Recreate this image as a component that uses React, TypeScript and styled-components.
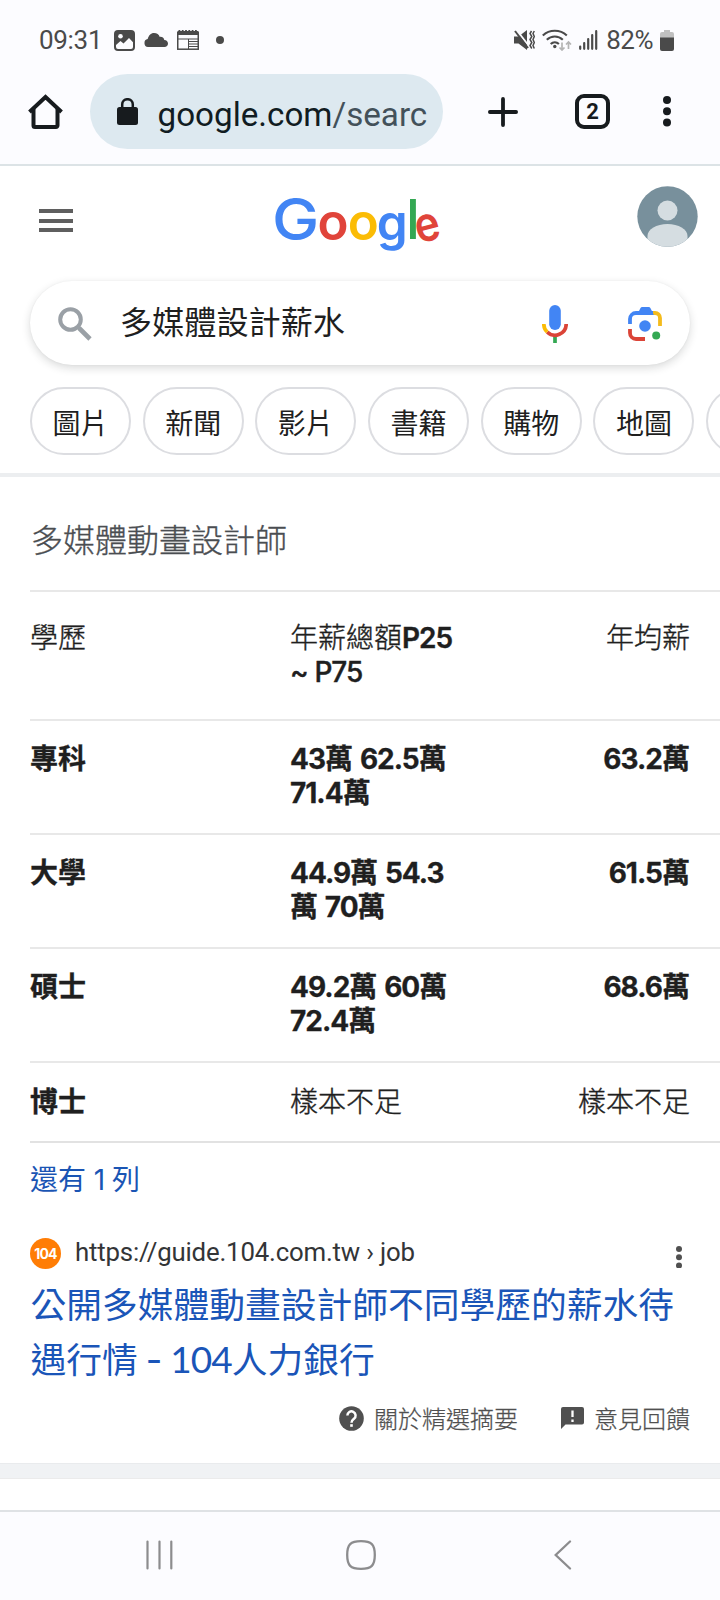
import React from "react";
import styled, { createGlobalStyle } from "styled-components";

const GlobalStyle = createGlobalStyle`
  *, *::before, *::after { box-sizing: border-box; }
  body { margin: 0; background: #fff; }
`;

const cjk = `"Noto Sans CJK TC", sans-serif`;
const ui = `Roboto, ${cjk}`;

const Screen = styled.div`
  width: 720px;
  height: 1600px;
  overflow: hidden;
  display: flex;
  flex-direction: column;
  background: #fff;
  color: #1f1f1f;
  font-family: ${ui};
  svg { display: block; flex: none; }
`;

/* System status bar */
const StatusBar = styled.div`
  height: 74px;
  flex: none;
  padding: 6px 46px 0 39px;
  display: flex;
  align-items: center;
  justify-content: space-between;
  background: #fcfcff;
  color: #4a4a4a;
`;
const StatusGroup = styled.div`
  display: flex;
  align-items: center;
`;
const StatusText = styled.span<{ $tight?: number }>`
  font: 400 26px/30px Roboto, sans-serif;
  letter-spacing: ${(p) => p.$tight ?? 0}px;
  white-space: nowrap;
`;
const StatusIcons = styled.div`
  margin-left: 12px;
  display: flex;
  align-items: center;
  gap: 9px;
`;
const StatusDot = styled.div`
  width: 8px;
  height: 8px;
  margin-left: 8px;
  border-radius: 50%;
  background: #4a4a4a;
`;
const StatusRight = styled(StatusGroup)`
  gap: 7px;
`;
const BatteryLevel = styled.div`
  display: flex;
  align-items: center;
  gap: 7px;
  margin-left: 1px;
`;

/* Browser toolbar */
const Toolbar = styled.div`
  height: 92px;
  flex: none;
  padding: 0 44px 0 28px;
  display: flex;
  align-items: flex-start;
  background: #fcfcff;
  border-bottom: 2px solid #dce3e6;
`;
const ToolIcon = styled.div<{ $left?: number }>`
  height: 75px;
  margin-left: ${(p) => p.$left ?? 0}px;
  display: flex;
  align-items: center;
`;
const AddressBar = styled.div`
  width: 353px;
  height: 75px;
  margin-left: 27px;
  padding: 0 14px 0 27px;
  display: flex;
  align-items: center;
  gap: 19.5px;
  border-radius: 38px;
  background: #dde9f0;
`;
const Address = styled.div`
  flex: 1;
  padding-top: 6px;
  white-space: nowrap;
  font: 400 33.2px/42px Roboto, sans-serif;
  color: #111c22;
  span { color: #43515a; }
`;
const TabCount = styled.div`
  width: 35px;
  height: 35px;
  display: flex;
  align-items: center;
  justify-content: center;
  border: 4px solid #171b1e;
  border-radius: 9px;
  font: 700 22px/26px Roboto, sans-serif;
  color: #171b1e;
`;

/* Search page header */
const PageHeader = styled.header`
  height: 311px;
  flex: none;
  background: #fff;
  border-bottom: 4px solid #eceef0;
`;
const BrandRow = styled.div`
  height: 115px;
  padding: 0 22px 0 39px;
  display: flex;
  align-items: flex-start;
  justify-content: space-between;
`;
const MenuButton = styled.div`
  margin-top: 43px;
  width: 34px;
  height: 23px;
  display: flex;
  flex-direction: column;
  justify-content: space-between;
`;
const MenuLine = styled.div`
  height: 4px;
  background: #5f5f5f;
`;
const LogoBox = styled.div`
  margin: 5px 0 0 7px;
`;
const AvatarButton = styled.div`
  margin-top: 20px;
`;
const SearchBox = styled.div`
  height: 84px;
  margin: 0 30px;
  padding: 1px 28px 0;
  display: flex;
  align-items: center;
  border-radius: 42px;
  background: #fff;
  box-shadow: 0 3px 9px rgba(32, 33, 36, 0.17), 0 0 2px rgba(32, 33, 36, 0.05);
`;
const Query = styled.div`
  flex: 1;
  margin-left: 28px;
  padding-bottom: 7px;
  font: 400 32.15px/48px ${cjk};
`;
const SearchIcons = styled.div`
  display: flex;
  align-items: center;
  gap: 60px;
`;
const Chips = styled.div`
  margin-top: 22px;
  padding-left: 30px;
  display: flex;
  gap: 11.7px;
  overflow: hidden;
`;
const Chip = styled.div`
  flex: none;
  width: 101px;
  height: 68px;
  display: flex;
  align-items: center;
  justify-content: center;
  padding-top: 2px;
  border: 2px solid #dcdde1;
  border-radius: 34px;
  font: 400 28px/40px ${cjk};
`;

/* Featured snippet */
const Snippet = styled.main`
  flex: none;
  height: 986px;
`;
const SnippetTitle = styled.div`
  height: 113px;
  padding: 37px 0 0 31px;
  font: 300 32px/48px ${cjk};
  -webkit-text-stroke: 0.35px currentColor;
  color: #4a4d51;
`;
const Table = styled.div`
  margin-left: 30px;
`;
const Row = styled.div<{ $h: number; $top?: number }>`
  height: ${(p) => p.$h}px;
  padding: ${(p) => p.$top ?? 19}px 30px 0 0;
  display: grid;
  grid-template-columns: 260px 220px 1fr;
  border-top: 2px solid #e8e8e8;
  line-height: 34px;
`;
const Cell = styled.div<{ $bold?: boolean; $end?: boolean }>`
  font-family: ${cjk};
  font-size: 28px;
  font-weight: ${(p) => (p.$bold ? 700 : 300)};
  -webkit-text-stroke: ${(p) => (p.$bold ? 0.3 : 0.4)}px currentColor;
  text-align: ${(p) => (p.$end ? "right" : "left")};
  white-space: nowrap;
  word-spacing: 0.5px;
`;
const Latin = styled.span<{ $weight?: number }>`
  font-family: Inter, sans-serif;
  font-size: 28px;
  line-height: 1;
  font-weight: ${(p) => p.$weight ?? 700};
  letter-spacing: -1px;
`;
const TableEnd = styled.div`
  margin-left: 30px;
  height: 2px;
  background: #e2e2e2;
`;
const MoreRows = styled.div`
  height: 94px;
  padding: 15px 0 0 30px;
  font: 400 28px/40px ${cjk};
  word-spacing: 1.5px;
  color: #1a55b4;
`;
const Source = styled.div`
  height: 32px;
  padding: 0 38px 0 30px;
  display: flex;
  align-items: center;
`;
const Favicon = styled.div`
  width: 31px;
  height: 31px;
  display: flex;
  align-items: center;
  justify-content: center;
  border-radius: 50%;
  background: #ff7d05;
  color: #fff;
  font: 700 14px/31px Inter, sans-serif;
  letter-spacing: -0.8px;
`;
const SourceUrl = styled.div`
  flex: 1;
  margin-left: 14px;
  padding-bottom: 2px;
  font: 400 25.8px/30px Roboto, sans-serif;
  letter-spacing: -0.18px;
  color: #333537;
`;
const SourceMenu = styled.div`
  margin-top: 8px;
`;
const ResultLink = styled.div`
  padding: 6px 0 0 30.5px;
  font: 400 35.75px/55px ${cjk};
  color: #1a55b8;
  white-space: nowrap;
`;
const LinkLatin = styled.span`
  font-family: Lato, sans-serif;
  font-size: 37px;
  line-height: 1;
  letter-spacing: -1px;
`;
const LinkDash = styled.span`
  font-family: Inter, sans-serif;
  font-size: 36px;
  line-height: 1;
`;
const Feedback = styled.div`
  padding: 15px 30px 0 0;
  display: flex;
  justify-content: flex-end;
  gap: 43px;
`;
const FeedbackItem = styled.div`
  display: flex;
  align-items: center;
  gap: 10px;
  font: 300 24px/36px ${cjk};
  -webkit-text-stroke: 0.25px currentColor;
  color: #505050;
`;
const Separator = styled.div`
  flex: none;
  height: 16px;
  background: #f0f2f4;
  border-top: 1px solid #e9ebed;
  border-bottom: 1px solid #ebebeb;
`;
const Gap = styled.div`
  flex: 1;
`;

/* System navigation */
const NavBar = styled.nav`
  flex: none;
  height: 90px;
  padding: 0 148px 3px 145px;
  display: grid;
  grid-template-columns: 201px 30px 1fr;
  align-items: center;
  border-top: 2px solid #dfe2e5;
  background: #fcfcff;
  svg:last-child { justify-self: end; }
`;

const ImageIcon = () => (
  <svg width="21" height="21" viewBox="0 0 21 21">
    <rect width="21" height="21" rx="4" fill="#4a4a4a" />
    <circle cx="6.5" cy="6.3" r="2.3" fill="#fcfcff" />
    <path d="M2 15l4.5-4 3 2.5L15 8l4 4.2V17a2 2 0 0 1-2 2H4a2 2 0 0 1-2-2z" fill="#fcfcff" />
  </svg>
);
const CloudIcon = () => (
  <svg width="24" height="14" viewBox="0 0 24 14">
    <path d="M4 14a4 4 0 0 1-.3-7.9C4.6 2.5 6.8 0 10 0c3 0 4.9 1.6 5.8 3.9 2.3-.3 4 1 4.5 3.1C22.5 7.2 24 8.6 24 10.5 24 12.5 22.5 14 20.5 14z" fill="#4a4a4a" />
  </svg>
);
const NewsIcon = () => (
  <svg width="22" height="20" viewBox="0 0 22 20" fill="none" stroke="#4a4a4a">
    <rect x=".75" y="2.2" width="20.5" height="17" strokeWidth="1.5" />
    <path d="M1 3h20" strokeWidth="4" />
    <path d="M1.5 .6h19" strokeWidth="1.2" strokeDasharray="1.8 1.5" />
    <path d="M1 9h20M11.5 9v10M12 11.5h9M12 14h9M12 16.5h9" strokeWidth="1" />
  </svg>
);
const MuteIcon = () => (
  <svg width="21" height="20" viewBox="0 0 21 20">
    <path d="M0 6.5h4.5L13 0v20l-8.5-6.5H0z" fill="#4a4a4a" />
    <path d="M2.5 0l14 18" stroke="#fcfcff" strokeWidth="2" />
    <path d="M1 1l13 17" stroke="#4a4a4a" strokeWidth="2" />
    <path d="M17.5 1l-1.5 2.5 1.8 3-1.8 3 1.8 3-1.8 3 1.8 3M20.3 1l-1.3 2.5 1.3 3-1.3 3 1.3 3-1.3 3 1.3 3" stroke="#4a4a4a" strokeWidth="1.5" fill="none" />
  </svg>
);
const WifiIcon = () => (
  <svg width="30" height="22" viewBox="0 0 30 22" fill="none" stroke="#4a4a4a" strokeWidth="2.1">
    <path d="M.8 6.5a17.5 17.5 0 0 1 24 0M4.8 10.8a11.5 11.5 0 0 1 16 0M8.7 15a6 6 0 0 1 8.2 0" />
    <circle cx="12.8" cy="17.5" r="1.7" fill="#4a4a4a" stroke="none" />
    <path d="M20 13.5v7.5M17.5 18.5l2.5 2.5 2.5-2.5M26.5 20v-7M24 15.5l2.5-2.5 2.5 2.5" stroke="#b4b4b4" strokeWidth="1.7" />
  </svg>
);
const SignalIcon = () => (
  <svg width="19" height="20" viewBox="0 0 19 20" stroke="#4a4a4a" strokeWidth="2.2" strokeLinecap="round">
    <path d="M1.2 16.5V18.8M5.2 13V18.8M9.2 9V18.8M13.2 5V18.8M17.2 1.2V18.8" />
  </svg>
);
const BatteryIcon = () => (
  <svg width="14" height="21" viewBox="0 0 14 21">
    <path d="M4 0h6v2h2a2 2 0 0 1 2 2v4H0V4a2 2 0 0 1 2-2h2z" fill="#c0c0c0" />
    <path d="M0 7.5h14V19a2 2 0 0 1-2 2H2a2 2 0 0 1-2-2z" fill="#4a4a4a" />
  </svg>
);
const HomeIcon = () => (
  <svg width="35" height="35" viewBox="0 0 35 35" fill="none" stroke="#171b1e" strokeWidth="4">
    <path d="M1.5 18L17.5 3 33.5 18" />
    <path d="M5.5 15v16.5a1.5 1.5 0 0 0 1.5 1.5h21a1.5 1.5 0 0 0 1.5-1.5V15" />
  </svg>
);
const LockIcon = () => (
  <svg width="21" height="27" viewBox="0 0 21 27">
    <rect y="9" width="21" height="18" rx="2.5" fill="#171b1e" />
    <path d="M5.2 10V6.5a5.3 5.3 0 0 1 10.6 0V10" fill="none" stroke="#171b1e" strokeWidth="2.5" />
  </svg>
);
const PlusIcon = () => (
  <svg width="30" height="30" viewBox="0 0 30 30" stroke="#171b1e" strokeWidth="3.8" strokeLinecap="round">
    <path d="M15 1.9v26.2M1.9 15h26.2" />
  </svg>
);
const Dots = ({ r, step, color }: { r: number; step: number; color: string }) => (
  <svg width={r * 2} height={r * 2 + step * 2} fill={color}>
    {[0, 1, 2].map((i) => (
      <circle key={i} cx={r} cy={r + i * step} r={r} />
    ))}
  </svg>
);

const GoogleLogo = () => (
  <svg width="180" height="90" viewBox="-4 -17 180 90" fontFamily="Inter, sans-serif" role="img">
    <text transform="translate(-1 51.5) scale(1.09 1)" fontSize="58" fontWeight="500" fill="#4285f4">G</text>
    <text x="44.5" y="51.5" fontSize="51" fontWeight="600" fill="#e0443a">o</text>
    <text x="74.7" y="51.5" fontSize="51" fontWeight="600" fill="#fbbc05">o</text>
    <text x="103.8" y="51.5" fontSize="49.5" fontWeight="600" fill="#4285f4">g</text>
    <text x="133" y="51" fontSize="55" fontWeight="500" fill="#34a853">l</text>
    <text transform="translate(145.5 55.5) rotate(-14) scale(0.88 1)" fontSize="48" fontWeight="600" fill="#e0443a">e</text>
  </svg>
);
const Avatar = () => (
  <svg width="61" height="61" viewBox="0 0 61 61">
    <defs>
      <clipPath id="avatar"><circle cx="30.5" cy="30.5" r="30.2" /></clipPath>
    </defs>
    <g clipPath="url(#avatar)">
      <rect width="61" height="61" fill="#78909c" />
      <g fill="#d5dde1">
        <circle cx="30.5" cy="24.5" r="10" />
        <path d="M10.5 61V50c0-7 9-12 20-12s20 5 20 12v11z" />
      </g>
    </g>
  </svg>
);
const SearchIcon = () => (
  <svg width="34" height="34" viewBox="0 0 34 34" fill="none" stroke="#9aa0a6" strokeWidth="4">
    <circle cx="12.5" cy="12.5" r="10.3" />
    <path d="M21 21l11 11" strokeWidth="4.6" />
    <path d="M19.5 19.5l3 3" strokeWidth="3" />
  </svg>
);
const MicIcon = () => (
  <svg width="26" height="38" viewBox="0 0 26 38" fill="none" strokeWidth="3.7">
    <rect x="7.2" width="11.6" height="25" rx="5.8" fill="#4285f4" />
    <path d="M13 32v6" stroke="#34a853" />
    <path d="M24.2 19a11.2 11.2 0 0 1-19 8" stroke="#db4437" />
    <path d="M1.8 19a11.2 11.2 0 0 0 3.4 8" stroke="#fbbc05" />
  </svg>
);
const LensIcon = () => (
  <svg width="34" height="34" viewBox="0 0 34 34" fill="none" strokeWidth="3.8">
    <path d="M24.5 6H27a5 5 0 0 1 5 5v8" stroke="#f4bb1c" />
    <path d="M2 17v-5a6 6 0 0 1 6-6h17" stroke="#4285f4" />
    <path d="M10.5 5l2-4a2 2 0 0 1 1.7-1h6.5a2 2 0 0 1 1.7 1l3.4 7h-15z" fill="#4285f4" />
    <path d="M2 22v4a6 6 0 0 0 6 6h9" stroke="#db4437" />
    <circle cx="17" cy="19" r="5.8" fill="#4285f4" />
    <circle cx="28.2" cy="28.5" r="4" fill="#34a853" />
  </svg>
);
const HelpIcon = () => (
  <svg width="25" height="25" viewBox="0 0 25 25" fill="none">
    <circle cx="12.5" cy="12.5" r="12.3" fill="#505050" />
    <path d="M8.4 9.5a4.1 4.1 0 1 1 6.6 3.2c-1.5 1.2-2.5 1.8-2.5 4" stroke="#fff" strokeWidth="2.5" />
    <rect x="11.2" y="18.2" width="2.6" height="2.6" fill="#fff" />
  </svg>
);
const FeedbackIcon = () => (
  <svg width="23" height="22" viewBox="0 0 23 22">
    <path d="M2 0h19a2 2 0 0 1 2 2v13.5a2 2 0 0 1-2 2H4.5L0 22V2a2 2 0 0 1 2-2z" fill="#505050" />
    <path d="M11.5 3.5v6.5M11.5 12.5V15" stroke="#fff" strokeWidth="2.3" />
  </svg>
);
const RecentsIcon = () => (
  <svg width="29" height="30" viewBox="0 0 29 30" stroke="#8c8c8e" strokeWidth="2.2" strokeLinecap="round">
    <path d="M2.5 1.5v27M14.5 1.5v27M26.3 1.5v27" />
  </svg>
);
const HomeKeyIcon = () => (
  <svg width="30" height="30" viewBox="0 0 30 30" fill="none" stroke="#8c8c8e" strokeWidth="2.3">
    <path d="M15 1.2c10.5 0 13.8 3.3 13.8 13.8S25.5 28.8 15 28.8 1.2 25.5 1.2 15 4.5 1.2 15 1.2z" />
  </svg>
);
const BackIcon = () => (
  <svg width="18" height="30" viewBox="0 0 18 30" fill="none" stroke="#8c8c8e" strokeWidth="2.3" strokeLinecap="round">
    <path d="M16 1.5L1.7 15 16 28.5" />
  </svg>
);

/* Sets Latin letters and digits in their own face, leaving Han text as is. */
const Mixed = ({ text, weight }: { text: string; weight?: number }) => (
  <>
    {text.split(/([0-9A-Za-z.~]+)/).map((part, i) =>
      i % 2 ? <Latin key={i} $weight={weight}>{part}</Latin> : part
    )}
  </>
);

const chips = ["圖片", "新聞", "影片", "書籍", "購物", "地圖", ""];
const rows = [
  { level: "專科", range: ["43萬 62.5萬", "71.4萬"], mean: "63.2萬" },
  { level: "大學", range: ["44.9萬 54.3", "萬 70萬"], mean: "61.5萬" },
  { level: "碩士", range: ["49.2萬 60萬", "72.4萬"], mean: "68.6萬" },
];

export default function App() {
  return (
    <Screen>
      <GlobalStyle />
      <StatusBar>
        <StatusGroup>
          <StatusText $tight={-0.3}>09:31</StatusText>
          <StatusIcons>
            <ImageIcon />
            <CloudIcon />
            <NewsIcon />
            <StatusDot />
          </StatusIcons>
        </StatusGroup>
        <StatusRight>
          <MuteIcon />
          <WifiIcon />
          <SignalIcon />
          <BatteryLevel>
            <StatusText $tight={-0.5}>82%</StatusText>
            <BatteryIcon />
          </BatteryLevel>
        </StatusRight>
      </StatusBar>
      <Toolbar>
        <ToolIcon><HomeIcon /></ToolIcon>
        <AddressBar>
          <LockIcon />
          <Address>google.com<span>/searc</span></Address>
        </AddressBar>
        <ToolIcon $left={45}><PlusIcon /></ToolIcon>
        <ToolIcon $left={57}><TabCount>2</TabCount></ToolIcon>
        <ToolIcon $left={53}><Dots r={4} step={11.3} color="#171b1e" /></ToolIcon>
      </Toolbar>

      <PageHeader>
        <BrandRow>
          <MenuButton><MenuLine /><MenuLine /><MenuLine /></MenuButton>
          <LogoBox><GoogleLogo /></LogoBox>
          <AvatarButton><Avatar /></AvatarButton>
        </BrandRow>
        <SearchBox>
          <SearchIcon />
          <Query>多媒體設計薪水</Query>
          <SearchIcons><MicIcon /><LensIcon /></SearchIcons>
        </SearchBox>
        <Chips>
          {chips.map((c, i) => <Chip key={i}>{c}</Chip>)}
        </Chips>
      </PageHeader>

      <Snippet>
        <SnippetTitle>多媒體動畫設計師</SnippetTitle>
        <Table>
          <Row $h={129} $top={27}>
            <Cell>學歷</Cell>
            <Cell><Mixed text="年薪總額P25" weight={600} /><br /><Mixed text="~ P75" weight={500} /></Cell>
            <Cell $end>年均薪</Cell>
          </Row>
          {rows.map((r) => (
            <Row key={r.level} $h={114}>
              <Cell $bold>{r.level}</Cell>
              <Cell $bold><Mixed text={r.range[0]} /><br /><Mixed text={r.range[1]} /></Cell>
              <Cell $bold $end><Mixed text={r.mean} /></Cell>
            </Row>
          ))}
          <Row $h={80} $top={20}>
            <Cell $bold>博士</Cell>
            <Cell>樣本不足</Cell>
            <Cell $end>樣本不足</Cell>
          </Row>
        </Table>
        <TableEnd />
        <MoreRows><Mixed text="還有 1 列" weight={400} /></MoreRows>
        <Source>
          <Favicon>104</Favicon>
          <SourceUrl>https://guide.104.com.tw › job</SourceUrl>
          <SourceMenu><Dots r={3} step={8.3} color="#505050" /></SourceMenu>
        </Source>
        <ResultLink>
          公開多媒體動畫設計師不同學歷的薪水待<br />遇行情 <LinkDash>-</LinkDash> <LinkLatin>104</LinkLatin>人力銀行
        </ResultLink>
        <Feedback>
          <FeedbackItem><HelpIcon />關於精選摘要</FeedbackItem>
          <FeedbackItem><FeedbackIcon />意見回饋</FeedbackItem>
        </Feedback>
      </Snippet>
      <Separator />
      <Gap />
      <NavBar>
        <RecentsIcon />
        <HomeKeyIcon />
        <BackIcon />
      </NavBar>
    </Screen>
  );
}
